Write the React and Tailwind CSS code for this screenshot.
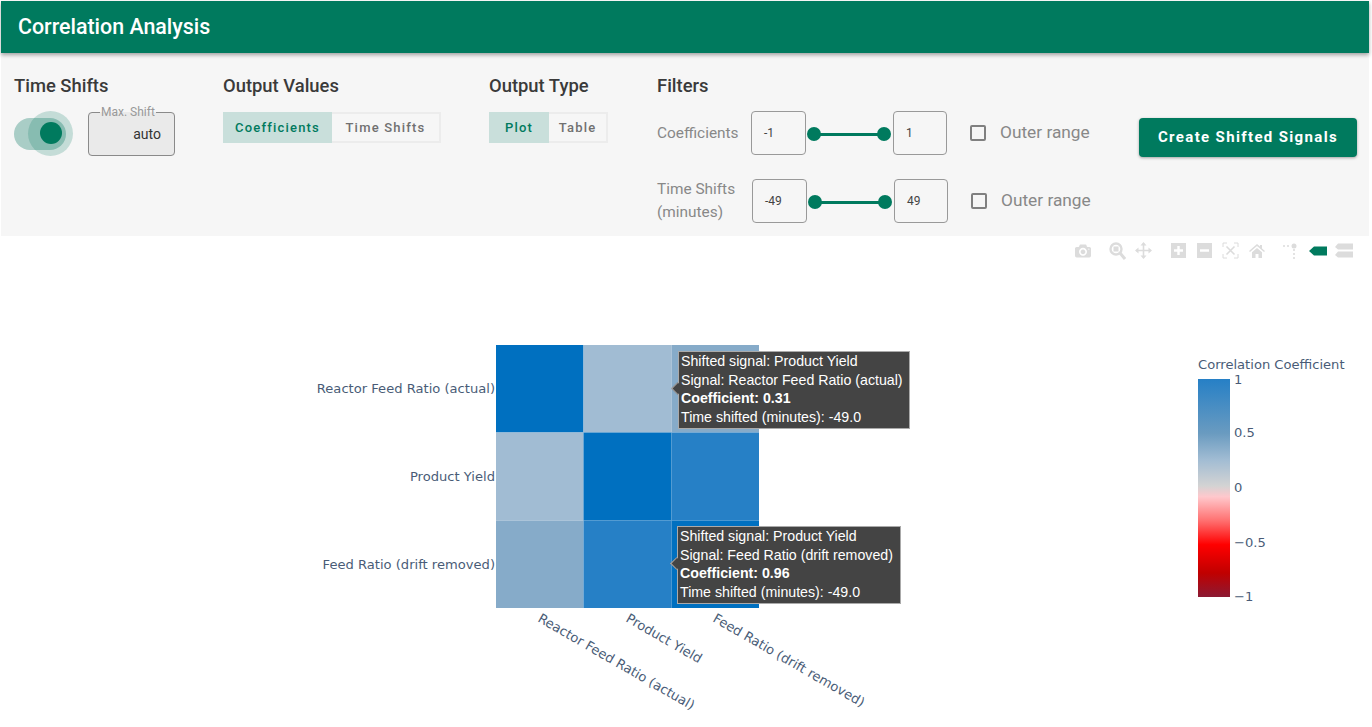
import React from 'react';

const GREEN = '#007a5e';

function Segmented({ options, widths }) {
  return (
    <div className="flex h-[31px] mt-[15px] text-[13px] font-medium tracking-[1.2px]">
      {options.map((opt, i) => (
        <div
          key={opt}
          className={`flex items-center justify-center border-2 ${
            i === 0 ? 'bg-[#c9dfdb] border-[#c9dfdb] text-[#007a5e]' : 'bg-[#f6f6f6] border-[#ececec] border-l-0 text-[#707070]'
          }`}
          style={{ width: widths[i] }}
        >
          {opt}
        </div>
      ))}
    </div>
  );
}

function RangeRow({ label, low, high, labelWidth, className }) {
  return (
    <div className={`flex items-center ${className}`}>
      <div className="text-[15.4px] leading-[23px] text-[#888888]" style={{ width: labelWidth }}>{label}</div>
      <div className="flex items-center w-[55px] h-[44px] pl-[12px] border border-[#999999] rounded-[4px] text-[12px] text-[#444444]">{low}</div>
      <div className="relative w-[87px] h-[14px] mt-[2px] flex items-center px-[8px]">
        <div className="w-full h-[3px] bg-[#007a5e]" />
        <div className="absolute left-[1px] w-[14px] h-[14px] rounded-full bg-[#007a5e]" />
        <div className="absolute left-[71px] w-[14px] h-[14px] rounded-full bg-[#007a5e]" />
      </div>
      <div className="flex items-center w-[54px] h-[44px] pl-[12px] border border-[#999999] rounded-[4px] text-[12px] text-[#444444]">{high}</div>
      <div className="ml-[23px] w-[16px] h-[16px] border-2 border-[#808080] rounded-[2px]" />
      <div className="ml-[14px] text-[17.3px] text-[#888888]">Outer range</div>
    </div>
  );
}

function ModeBar() {
  const c = '#dcdcdc';
  return (
    <div className="flex justify-end items-center h-[28px] pt-[1px] pr-[16px]">
      {/* camera */}
      <svg width="18" height="16" viewBox="0 -850 1000 1000" className="mr-[17px]">
        <g transform="scale(1,-1)">
          <path fill={c} d="m500 450c-83 0-150-67-150-150 0-83 67-150 150-150 83 0 150 67 150 150 0 83-67 150-150 150z m400 150h-120c-16 0-34 13-39 29l-31 93c-6 15-23 28-40 28h-340c-16 0-34-13-39-28l-31-94c-6-15-23-28-40-28h-120c-55 0-100-45-100-100v-450c0-55 45-100 100-100h800c55 0 100 45 100 100v450c0 55-45 100-100 100z m-400-550c-138 0-250 112-250 250 0 138 112 250 250 250 138 0 250-112 250-250 0-138-112-250-250-250z m365 380c-19 0-35 16-35 35 0 19 16 35 35 35 19 0 35-16 35-35 0-19-16-35-35-35z" />
        </g>
      </svg>
      {/* zoom */}
      <svg width="17" height="18" viewBox="0 0 17 18" className="mr-[9px]">
        <circle cx="7" cy="7" r="5.5" fill="none" stroke={c} strokeWidth="2.4" />
        <rect x="4.5" y="4.5" width="5" height="5" fill={c} />
        <path d="M11 11l5 6" stroke={c} strokeWidth="3" />
      </svg>
      {/* pan */}
      <svg width="17" height="17" viewBox="0 0 17 17" className="mr-[19px]">
        <path d="M8.5 1v15M1 8.5h15" stroke={c} strokeWidth="1.6" />
        <path d="M8.5 0l3 3.5h-6zM8.5 17l3-3.5h-6zM0 8.5l3.5-3v6zM17 8.5l-3.5-3v6z" fill={c} />
      </svg>
      {/* zoom in */}
      <svg width="15" height="15" viewBox="0 0 15 15" className="mr-[11px]">
        <path fillRule="evenodd" fill={c} d="M0 0h15v15H0zM6.3 3v3.3H3v2.4h3.3V12h2.4V8.7H12V6.3H8.7V3z" />
      </svg>
      {/* zoom out */}
      <svg width="15" height="15" viewBox="0 0 15 15" className="mr-[10px]">
        <path fillRule="evenodd" fill={c} d="M0 0h15v15H0zM3 6.3v2.4h9V6.3z" />
      </svg>
      {/* autoscale */}
      <svg width="17" height="17" viewBox="0 0 17 17" className="mr-[10px]">
        <path d="M1 5V1h4M12 1h4v4M16 12v4h-4M5 16H1v-4" fill="none" stroke={c} strokeWidth="1" />
        <path d="M4.5 4.5l8 8M12.5 4.5l-8 8" stroke={c} strokeWidth="1.6" />
      </svg>
      {/* home */}
      <svg width="16" height="14" viewBox="0 0 16 14" className="mr-[18px]">
        <path fill={c} d="M8 0l3 2.6V1h2v3.4L16 7l-1 1-7-6-7 6-1-1zM3 8.2l5-4.2 5 4.2V14H9.500v-4h-3v4H3z" />
      </svg>
      {/* spikes */}
      <svg width="14" height="16" viewBox="0 0 14 16" className="mr-[12px]">
        <circle cx="11" cy="3" r="2.500" fill={c} />
        <path d="M0 3h8" stroke={c} strokeWidth="1.600" strokeDasharray="2 2" />
        <path d="M11 6v10" stroke={c} strokeWidth="1.600" strokeDasharray="2 2" />
      </svg>
      {/* closest */}
      <svg width="18" height="10" viewBox="0 0 18 10" className="mr-[8px]">
        <path fill={GREEN} d="M0 5l5-4.500h13v9H5z" />
      </svg>
      {/* compare */}
      <svg width="18" height="16" viewBox="0 0 18 16">
        <path fill={c} d="M0 4l3-3.500h15v6H3zM0 12l3-3.500h15v6H3z" />
      </svg>
    </div>
  );
}

function Tooltip({ lines, className }) {
  return (
    <div className={`absolute h-[78px] bg-[#444444] border border-[#aaaaaa] pl-[2px] text-white text-[14.2px] leading-[18.5px] font-['Liberation_Sans',sans-serif] ${className}`}>
      <div className="absolute left-[-6px] top-[32px] w-[9px] h-[9px] rotate-45 bg-[#444444] border-l border-b border-[#aaaaaa]" />
      {lines.map((l, i) => (
        <div key={i} className={`relative whitespace-nowrap ${l.bold ? 'font-bold' : ''}`}>{l.text}</div>
      ))}
    </div>
  );
}

function Chart() {
  const deep = '#0070c0';
  const a = '#a1bcd3';
  const b = '#86abc9';
  const m = '#2680c6';
  const xs = [496, 583.5, 671.5];
  const ys = [345, 432.5, 520.5];
  const cells = [
    [deep, a, b],
    [a, deep, m],
    [b, m, deep],
  ];
  const tick = { fontSize: 13.1, fill: '#2a3f5f', fontFamily: "'DejaVu Sans', sans-serif", opacity: 0.85 };
  return (
    <svg width="1368" height="463" viewBox="1 264 1368 463" className="block">
      <defs>
        <linearGradient id="cb" x1="0" y1="0" x2="0" y2="1">
          <stop offset="0" stopColor="#2680c6" />
          <stop offset="0.25" stopColor="#6a9bc0" />
          <stop offset="0.37" stopColor="#a1bcd3" />
          <stop offset="0.49" stopColor="#d3d3d3" />
          <stop offset="0.54" stopColor="#ffc8cc" />
          <stop offset="0.65" stopColor="#ff7070" />
          <stop offset="0.76" stopColor="#ff0000" />
          <stop offset="0.89" stopColor="#c00000" />
          <stop offset="1" stopColor="#8b1a33" />
        </linearGradient>
      </defs>
      {cells.map((row, r) =>
        row.map((fill, c) => (
          <rect key={`${r}-${c}`} x={xs[c]} y={ys[r]} width={c === 0 ? 87.5 : c === 1 ? 88 : 87.5} height={r === 0 ? 87.5 : r === 1 ? 88 : 87.5} fill={fill} />
        ))
      )}
      <text x="495" y="393" textAnchor="end" {...tick}>Reactor Feed Ratio (actual)</text>
      <text x="495" y="481" textAnchor="end" {...tick}>Product Yield</text>
      <text x="495" y="569" textAnchor="end" {...tick}>Feed Ratio (drift removed)</text>
      <text transform="translate(537,621) rotate(30)" {...tick}>Reactor Feed Ratio (actual)</text>
      <text transform="translate(625,621) rotate(30)" {...tick}>Product Yield</text>
      <text transform="translate(712,621) rotate(30)" {...tick}>Feed Ratio (drift removed)</text>

      <text x="1198" y="369" {...tick}>Correlation Coefficient</text>
      <rect x="1198" y="379" width="32" height="218" fill="url(#cb)" />
      <text x="1234" y="384" {...tick}>1</text>
      <text x="1234" y="437" {...tick}>0.5</text>
      <text x="1234" y="492" {...tick}>0</text>
      <text x="1234" y="547" {...tick}>−0.5</text>
      <text x="1234" y="601" {...tick}>−1</text>
    </svg>
  );
}

export default function App() {
  return (
    <div className="bg-white w-[1372px] h-[727px] overflow-hidden pt-[1px] pl-[1px] pr-[3px] font-['Roboto',sans-serif]">
      <div className="relative z-10 h-[52px] flex items-center pl-[17px] bg-[#007a5e] text-white text-[21.4px] font-medium shadow-[0_2px_4px_rgba(0,0,0,0.35)]">
        Correlation Analysis
      </div>

      <div className="flex h-[183px] bg-[#f6f6f6] pl-[13px] pt-[22px]">
        <div className="w-[209px]">
          <div className="text-[18.4px] font-medium leading-[21px] text-[#3a3a3a]">Time Shifts</div>
          <div className="flex mt-[15px]">
            <div className="relative w-[59px] h-[45px] flex items-center">
              <div className="w-[52px] h-[32px] rounded-full bg-[#a9cdc6]" />
              <div className="absolute left-[14px] top-0 w-[45px] h-[45px] rounded-full bg-[#007a5e]/20" />
              <div className="absolute left-[26px] top-[11px] w-[22px] h-[22px] rounded-full bg-[#007a5e]" />
            </div>
            <fieldset className="ml-[15px] mt-[-4px] w-[87px] h-[49px] border border-[#8a8a8a] rounded-[4px] bg-[#eaeaea] px-[9px] text-right">
              <legend className="ml-[2px] px-[1px] text-left text-[12px] leading-[10px] text-[#999999]">Max. Shift</legend>
              <div className="mt-[7px] pr-[4px] text-[14px] leading-[20px] text-[#333333]">auto</div>
            </fieldset>
          </div>
        </div>

        <div className="w-[266px]">
          <div className="text-[18.4px] font-medium leading-[21px] text-[#3a3a3a]">Output Values</div>
          <div className="pt-[1px]">
            <Segmented options={['Coefficients', 'Time Shifts']} widths={[109, 109]} />
          </div>
        </div>

        <div className="w-[168px]">
          <div className="text-[18.4px] font-medium leading-[21px] text-[#3a3a3a]">Output Type</div>
          <div className="pt-[1px]">
            <Segmented options={['Plot', 'Table']} widths={[60, 59]} />
          </div>
        </div>

        <div className="w-[482px]">
          <div className="text-[18.4px] font-medium leading-[21px] text-[#3a3a3a]">Filters</div>
          <RangeRow label="Coefficients" labelWidth={94} low="-1" high="1" className="mt-[15px]" />
          <RangeRow label={<>Time Shifts<br />(minutes)</>} labelWidth={95} low="-49" high="49" className="mt-[23px]" />
        </div>

        <div className="flex items-start pt-[43px]">
          <div className="w-[218px] h-[39px] flex items-center justify-center rounded-[4px] bg-[#007a5e] text-white text-[15px] font-bold tracking-[1.35px] shadow-[0_1px_3px_rgba(0,0,0,0.35)]">
            Create Shifted Signals
          </div>
        </div>
      </div>

      <div className="relative bg-white">
        <ModeBar />
        <Chart />
        <Tooltip
          className="left-[677px] top-[115px] w-[232px]"
          lines={[
            { text: 'Shifted signal: Product Yield' },
            { text: 'Signal: Reactor Feed Ratio (actual)' },
            { text: 'Coefficient: 0.31', bold: true },
            { text: 'Time shifted (minutes): -49.0' },
          ]}
        />
        <Tooltip
          className="left-[676px] top-[290px] w-[224px]"
          lines={[
            { text: 'Shifted signal: Product Yield' },
            { text: 'Signal: Feed Ratio (drift removed)' },
            { text: 'Coefficient: 0.96', bold: true },
            { text: 'Time shifted (minutes): -49.0' },
          ]}
        />
      </div>
    </div>
  );
}
